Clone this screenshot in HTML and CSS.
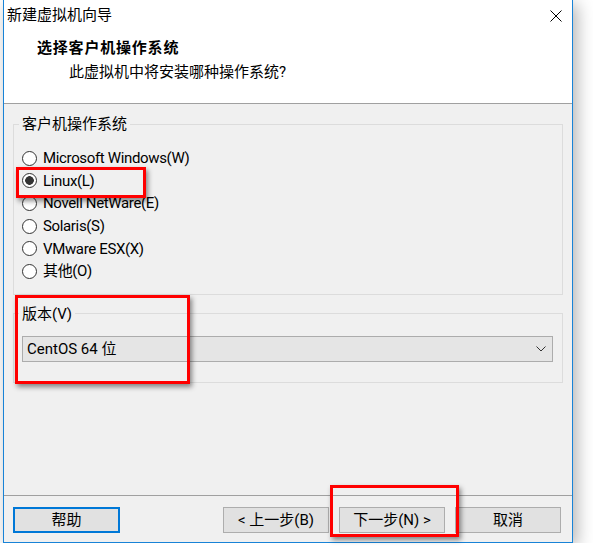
FILE: index.html
```html
<!DOCTYPE html>
<html lang="zh-CN">
<head>
  <meta charset="UTF-8" />
  <meta name="viewport" content="width=device-width, initial-scale=1.0" />
  <title>新建虚拟机向导</title>
  <link rel="stylesheet" href="styles.css">
</head>
<body>
  <div class="window">
    <div class="titlebar">
      <span class="title">新建虚拟机向导</span>
      <svg class="close" width="12" height="12" viewBox="0 0 12 12">
        <path d="M0.5 0.5 L11.5 11.5 M11.5 0.5 L0.5 11.5" stroke="#000" stroke-width="1" fill="none" />
      </svg>
    </div>

    <div class="header">
      <h1>选择客户机操作系统</h1>
      <p>此虚拟机中将安装哪种操作系统?</p>
    </div>

    <div class="content">
      <fieldset class="group os-group">
        <legend>客户机操作系统</legend>
        <label class="option"><input type="radio" name="os" /> Microsoft Windows(W)</label>
        <label class="option"><input type="radio" name="os" checked /> Linux(L)</label>
        <label class="option"><input type="radio" name="os" /> Novell NetWare(E)</label>
        <label class="option"><input type="radio" name="os" /> Solaris(S)</label>
        <label class="option"><input type="radio" name="os" /> VMware ESX(X)</label>
        <label class="option"><input type="radio" name="os" /> 其他(O)</label>
      </fieldset>

      <fieldset class="group version-group">
        <legend>版本(V)</legend>
        <div class="select">
          <span>CentOS 64 位</span>
          <svg width="10" height="6" viewBox="0 0 10 6">
            <path d="M0.5 0.5 L5 5 L9.5 0.5" stroke="#333" stroke-width="1" fill="none" />
          </svg>
        </div>
      </fieldset>
    </div>

    <div class="footer">
      <button class="btn btn-default">帮助</button>
      <div class="spacer"></div>
      <button class="btn">&lt; 上一步(B)</button>
      <button class="btn">下一步(N) &gt;</button>
      <button class="btn">取消</button>
    </div>
  </div>

  <div class="mark mark-linux"></div>
  <div class="mark mark-version"></div>
  <div class="mark mark-next"></div>
</body>
</html>
```

FILE: styles.css
```css
body {
  margin: 0;
  background: #fff;
  font-family: Roboto, "Noto Sans CJK SC", sans-serif;
  font-size: 15px;
  color: #000;
}
.window {
  margin-left: 3px;
  width: 570px;
  border: 1px solid #1883d7;
  border-top: none;
  box-sizing: border-box;
  background: #fff;
  box-shadow: 4px 4px 16px rgba(0,0,0,0.3);
}
.titlebar {
  height: 31px;
  display: flex;
  align-items: center;
  justify-content: space-between;
  padding: 0 10px 0 3px;
}
.title {
  line-height: 31px;
}
.close {
  margin-top: 1px;
}
.header {
  height: 73px;
  box-sizing: border-box;
  padding: 7px 0 0 33px;
  border-bottom: 1px solid #a0a0a0;
}
.header h1 {
  margin: 0;
  font-size: 15px;
  font-weight: bold;
  line-height: 20px;
  letter-spacing: 0.8px;
}
.header p {
  margin: 4px 0 0 32px;
  line-height: 20px;
}
.content {
  height: 392px;
  box-sizing: border-box;
  background: #f0f0f0;
  padding: 11px 9px 0 9px;
  border-bottom: 1px solid #a0a0a0;
}
.group {
  margin: 0;
  border: 1px solid #dcdcdc;
  padding: 0 9px 0 8px;
}
.group legend {
  margin-left: -3px;
  padding: 0 3px;
  line-height: 18px;
}
.os-group {
  padding-top: 14px;
  padding-bottom: 11px;
}
.option {
  display: flex;
  align-items: center;
  height: 22.6px;
  line-height: 20px;
  letter-spacing: -0.35px;
}
.option input {
  appearance: none;
  margin: 0 6px 0 0;
  width: 15px;
  height: 15px;
  border: 1px solid #333;
  border-radius: 50%;
  background: #fff;
  flex-shrink: 0;
}
.option input:checked {
  background: radial-gradient(circle, #333 0, #333 4px, #fff 4.6px);
}
.version-group {
  margin-top: 10px;
  padding-top: 13px;
  padding-bottom: 20px;
}
.select {
  height: 26px;
  box-sizing: border-box;
  border: 1px solid #acacac;
  background: #e5e5e5;
  display: flex;
  align-items: center;
  justify-content: space-between;
  padding: 0 6px 0 4px;
  line-height: 20px;
}
.footer {
  height: 46px;
  box-sizing: border-box;
  background: #f0f0f0;
  display: flex;
  align-items: flex-start;
  gap: 10px;
  padding: 11px 11px 0 9px;
}
.spacer {
  flex: 1;
}
.btn {
  width: 106px;
  height: 26px;
  border: 1px solid #adadad;
  background: #e1e1e1;
  font-family: inherit;
  font-size: 15px;
  color: #000;
  padding: 0;
  line-height: 20px;
}
.btn-default {
  border: 2px solid #0078d7;
  width: 107px;
}
.mark {
  position: absolute;
  border: 3px solid #ff0000;
  box-sizing: border-box;
  box-shadow: 2px 3px 5px rgba(0,0,0,0.45);
}
.mark-linux {
  left: 16px;
  top: 167px;
  width: 130px;
  height: 31px;
}
.mark-version {
  left: 15px;
  top: 295px;
  width: 175px;
  height: 89px;
}
.mark-next {
  left: 330px;
  top: 485px;
  width: 129px;
  height: 52px;
}
```
